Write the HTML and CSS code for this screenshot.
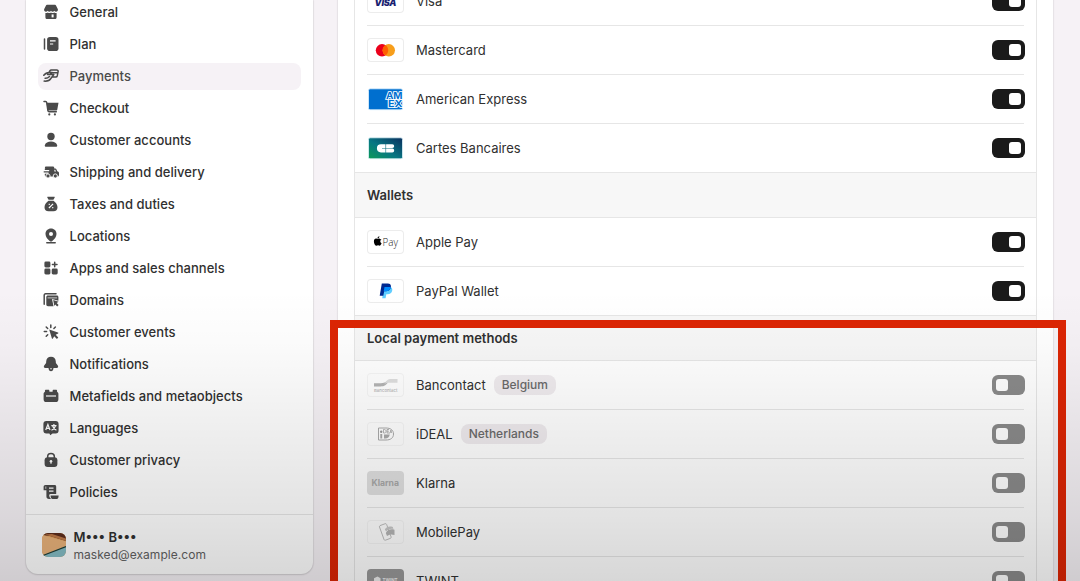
FILE: index.html
```html
<!DOCTYPE html>
<html lang="en">
<head>
    <meta charset="UTF-8" />
    <title>Settings - Payments</title>
    <link rel="stylesheet" href="styles.css">
</head>
<body>

<div class="page">
  <aside class="sidebar">
    <nav class="menu">
      <a class="item"><svg viewBox="0 0 16 16"><path d="M4 .8h8c.5 0 .8.200 1 .6l1.900 3.900c.2 1.500-.6 2.400-1.800 2.400-.9 0-1.500-.4-1.800-1-.4.600-1 1-1.700 1S8.300 7.300 8 6.700c-.4.600-.9 1-1.600 1s-1.300-.4-1.700-1c-.4.600-1 1-1.800 1C1.700 7.700.9 6.800 1.100 5.300L3 1.400c.2-.4.500-.6 1-.6z"/><path d="M2.400 9c1 .1 1.800-.1 2.400-.6 1 .8 2.200.8 3.200 0 1 .8 2.200.8 3.200 0 .6.500 1.400.7 2.400.6v4.200c0 1.200-.7 1.900-1.900 1.900H4.300c-1.200 0-1.900-.7-1.900-1.900z"/><path class="cut" d="M8.600 10.400h2v3h-2z"/></svg>General</a>
      <a class="item"><svg viewBox="0 0 16 16"><rect x="4.100" y=".9" width="11.400" height="14.200" rx="2.800"/><path class="line" d="M1.500 3v10"/><path class="cutline" d="M7 4.900h5.600M7 8h3.200"/></svg>Plan</a>
      <a class="item active"><svg viewBox="0 0 16 16"><path class="line" d="M6 4.300 6.800 3c.4-.6.900-.9 1.500-.9h5.500c.9 0 1.500.7 1.300 1.600l-.8 4c-.2.800-.8 1.300-1.600 1.300H9.700M8.800 4.700h6M.8 7.300C2.500 5 4.400 4.400 6.600 4.500h2.600L6.700 6.600H4.500M6.700 6.600h4.100L8 10.300C6.500 12.800 4.400 13.300 1.200 13.100M2.100 10.300c1.900.3 3-.4 4.400-1.800"/></svg>Payments</a>
      <a class="item"><svg viewBox="0 0 16 16"><path class="line" d="M1 1.500h1.600c.6 0 1 .4 1.100 1l1.200 8c.1.900.6 1.200 1.400 1.200h7"/><path d="M3.500 2.800h12l-1.200 6.700c-.1.700-.6 1.100-1.300 1.100H4.700z"/><circle cx="6.300" cy="14.400" r="1.100"/><circle cx="11.900" cy="14.400" r="1.100"/></svg>Checkout</a>
      <a class="item"><svg viewBox="0 0 16 16"><circle cx="8" cy="4.500" r="3.700"/><path d="M1.800 13.200C2.500 10.700 5 9.500 8 9.500s5.500 1.200 6.200 3.700c.2.900-.5 1.600-1.400 1.600H3.200c-.9 0-1.600-.7-1.400-1.600z"/></svg>Customer accounts</a>
      <a class="item"><svg viewBox="0 0 16 16"><path d="M4.500 2.500h5.300c.9 0 1.500.7 1.500 1.500v.5h.9c.7 0 1.100.3 1.300.9l.8 1.900 1 .5c.5.3.7.7.7 1.300v1.900c0 .9-.6 1.500-1.400 1.500H3.300c-.9 0-1.500-.6-1.500-1.500V9.700h3.700V8.500H.7V7.200h5.500V5.900H1.800V4.600H4l-1-.1c-.8-.1-1.100-.5-1.100-1.100 0-.6.400-.9 1-.9z"/><path class="cut" d="M11.400 5.700h.8l.8 1.800h-1.600z"/><circle class="ring" cx="5" cy="12" r="2.100"/><circle class="ring" cx="12.300" cy="12" r="2.100"/></svg>Shipping and delivery</a>
      <a class="item"><svg viewBox="0 0 16 16"><path d="M4.900.8h6.200c.6 0 .8.500.5 1L10.400 3.800H5.600L4.400 1.800C4.100 1.300 4.300.8 4.900.8zM5.500 4.700h5c2.500 1.700 4 4.200 4 6.600 0 2.500-1.500 3.900-4 3.900h-5c-2.500 0-4-1.400-4-3.900 0-2.400 1.500-4.900 4-6.600z"/><path class="cutline" d="m5.900 12 4.200-4.200M5.700 8.300h1.100M9.200 11.600h1.100"/></svg>Taxes and duties</a>
      <a class="item"><svg viewBox="0 0 16 16"><path d="M8 .6c3.200 0 5.500 2.300 5.500 5.300 0 2.800-2.100 5.200-4.200 7-.8.700-1.800.7-2.600 0-2.100-1.800-4.200-4.200-4.200-7C2.500 2.900 4.800.6 8 .6z"/><circle class="cut" cx="8" cy="6" r="2"/><path class="line" d="M3.800 14.700h8.400"/></svg>Locations</a>
      <a class="item"><svg viewBox="0 0 16 16"><rect x="1.400" y="1.600" width="6" height="5.800" rx="1.400"/><rect x="1.400" y="8.600" width="6" height="5.800" rx="1.400"/><rect x="8.700" y="8.600" width="6" height="5.800" rx="1.400"/><path class="line" d="M11.700 2.200v4.600M9.400 4.500h4.600"/></svg>Apps and sales channels</a>
      <a class="item"><svg viewBox="0 0 16 16"><path class="line" d="M1.200 12.300V3.200c0-.9.500-1.400 1.400-1.400h10.400"/><path d="M5 3.500h8.800c1 0 1.600.6 1.600 1.600v3.700L9 7.100l1.500 7.200H5c-1 0-1.700-.6-1.700-1.700V5.100c0-1 .7-1.600 1.700-1.600z"/><path class="cutline thin" d="M4.600 5.900h9.500"/><path d="m10.200 8.100 5.400 1.700-1.900 1.100 1.900 2.100-1.400 1.400-2-2-.9 1.500z"/></svg>Domains</a>
      <a class="item"><svg viewBox="0 0 16 16"><path d="m6.200 5.600 8.800 2.800c.5.200.5.800.1 1l-2.400 1.400 2.600 2.600-1.400 1.500-2.700-2.700-1.300 2.300c-.2.500-.9.400-1-.1z"/><path class="line" d="M7.800 1.100v2.300M3.200 3l1.500 1.500M12.400 3l-1.500 1.500M1.300 7.600h2.300M3.200 12.200l1.500-1.500"/></svg>Customer events</a>
      <a class="item"><svg viewBox="0 0 16 16"><path d="M8 .8c2.900 0 4.700 1.900 4.800 4.600l.1 1.600 1.900 2.600c.9 1.200.2 2.500-1.200 2.500H2.400C1 12.100.3 10.800 1.200 9.600L3.100 7l.1-1.600C3.300 2.700 5.100.8 8 .8zM5.500 12h5c-.2 2.100-1.100 3.200-2.500 3.200S5.700 14.100 5.500 12z"/><path class="cut" d="M7.200 12.200h1.600v1.100H7.200z"/></svg>Notifications</a>
      <a class="item"><svg viewBox="0 0 16 16"><path d="M3 1.800h2.300c.7 0 1.100.4 1.100 1.100v.8h3.200v-.8c0-.7.400-1.100 1.100-1.100H13c.7 0 1.100.4 1.100 1.100v1.200c.9.400 1.300 1 1.300 1.900v5.200c0 1.900-1 2.900-2.900 2.900h-9c-1.900 0-2.900-1-2.900-2.900V6c0-.9.400-1.500 1.300-1.900V2.900c0-.7.400-1.100 1.100-1.100z"/><path class="cutline" d="M3 8h10"/></svg>Metafields and metaobjects</a>
      <a class="item"><svg viewBox="0 0 16 16"><path d="M3.300 1h9.400c1.900 0 2.900 1 2.900 2.900v6.600c0 1.900-1 2.900-2.900 2.900H9.500l-2.200 1.800-.9-1.800H3.300c-1.900 0-2.900-1-2.900-2.900V3.900C.4 2 1.400 1 3.300 1z"/><path class="cutline" d="M2.700 10 4.900 4.500 7 10M3.500 8.400h2.800M8.300 5.600h5.200M10.900 4v1.600M9.500 5.800c.7 2 1.900 3.600 3.900 4.500M12.500 5.800c-.6 2.100-1.800 3.600-4 4.500"/></svg>Languages</a>
      <a class="item"><svg viewBox="0 0 16 16"><path class="line" d="M4.700 6.500V4.300C4.700 2.500 6 1.400 8 1.400s3.300 1.100 3.300 2.900v2.200"/><rect x="1.600" y="5.300" width="12.800" height="9.700" rx="3"/><circle class="cut" cx="8" cy="9.300" r="1.300"/><path class="cutline" d="M8 9.800v2"/></svg>Customer privacy</a>
      <a class="item"><svg viewBox="0 0 16 16"><path d="M2.500 1h9c1.100 0 1.700.7 1.700 1.700v7.400H7.600c-1.200 0-1.500.9-1.300 2 .2 1.500 1 2.300 2 3H6.100c-1.900 0-2.700-1.100-2.700-2.800V6.200H.6V2.900C.6 1.700 1.300 1 2.500 1z"/><path d="M7.600 11.400h8c0 2.500-.8 3.700-2.500 3.700H9.500c-1.200-.5-1.900-1.600-1.900-3.700z"/><path class="cutline" d="M6 4.200h4.500M6 7.200h4.500"/><path class="cutline thin" d="M2.800 2.500v2.300"/></svg>Policies</a>
    </nav>
    <div class="user">
      <svg class="avatar" viewBox="0 0 24 24">
        <rect width="24" height="24" fill="#e0a35f"/>
        <path d="M0 0h24v8L8 3 0 2z" fill="#5c2c1c"/>
        <path d="M3 1.500 24 8V5.500L10 1z" fill="#c07a48"/>
        <path d="M0 2 24 8.500V14L0 22.500z" fill="#e9b27a"/>
        <path d="M0 23 24 13.500V24H0z" fill="#84bcc4"/>
        <path d="M1 22.500 24 13.600" stroke="#1c3d38" stroke-width="1.200"/>
      </svg>
      <div>
        <div class="user-name">M••• B•••</div>
        <div class="user-mail">masked@example.com</div>
      </div>
    </div>
  </aside>

  <main class="card">
    <div class="methods">
      <section class="group">
        <div class="row">
          <svg class="logo" viewBox="0 0 36 24"><text class="visa" x="18" y="16.500" text-anchor="middle" textLength="22">VISA</text></svg>
          <span class="name">Visa</span><span class="toggle on"></span>
        </div>
        <div class="row">
          <svg class="logo" viewBox="0 0 36 24"><circle cx="14.500" cy="12.300" r="6.200" fill="#eb001b"/><circle cx="21.300" cy="12.300" r="6.200" fill="#f79e1b"/><path d="M17.900 7.100a6.200 6.200 0 0 1 0 10.400 6.200 6.200 0 0 1 0-10.400z" fill="#ff5f00"/></svg>
          <span class="name">Mastercard</span><span class="toggle on"></span>
        </div>
        <div class="row">
          <svg class="logo bare" viewBox="0 0 36 24"><rect x="1" y="1.800" width="34" height="21" rx="1.500" fill="#006fcf" stroke="#dff3ff" stroke-width=".8"/><text class="amex" x="18.500" y="12" textLength="16.500" lengthAdjust="spacingAndGlyphs">AM</text><text class="amex" x="20.500" y="20" textLength="14.500" lengthAdjust="spacingAndGlyphs">EX</text></svg>
          <span class="name">American Express</span><span class="toggle on"></span>
        </div>
        <div class="row">
          <svg class="logo bare" viewBox="0 0 36 24">
            <defs><linearGradient id="cb" x1="0" y1="1" x2="1" y2="0"><stop offset="0" stop-color="#0b9a57"/><stop offset=".45" stop-color="#087783"/><stop offset="1" stop-color="#0a2f5e"/></linearGradient></defs>
            <rect x="1" y="1.800" width="34" height="21" rx="1.500" fill="url(#cb)" stroke="#dff5fa" stroke-width=".8"/>
            <path d="M13.500 8.200H18v3.700h-3.500v.7H18v3.800h-4.500a4.100 4.100 0 0 1 0-8.200zM18.600 8.200h6.200a1.900 1.900 0 0 1 0 3.800h-6.200zM18.600 12.600h6.200a1.900 1.900 0 0 1 0 3.800h-6.200z" fill="#fff"/>
          </svg>
          <span class="name">Cartes Bancaires</span><span class="toggle on"></span>
        </div>
      </section>

      <h3>Wallets</h3>
      <section class="group">
        <div class="row">
          <svg class="logo" viewBox="0 0 36 24"><path d="M13 9.200c-.7-.9-1.700-.9-2.500-.5-.4.200-.7.200-1.100 0-1.600-.7-3 .5-3 2.700 0 2 1.300 4.300 2.600 4.300.6 0 .8-.4 1.500-.4s.9.400 1.500.4c1 0 1.800-1.400 2.100-2.400-1.700-.8-1.800-3.100-.1-4.100zM10 8.200c0-1.100.8-1.800 1.900-2 .1 1.100-.8 2-1.900 2z"/><text class="apple" x="15" y="15.600" textLength="15.500" lengthAdjust="spacingAndGlyphs">Pay</text></svg>
          <span class="name">Apple Pay</span><span class="toggle on"></span>
        </div>
        <div class="row">
          <svg class="logo" viewBox="0 0 36 24"><path d="M16.500 8h5.600c2.100 0 3.100 1.500 2.600 3.600-.5 2.500-2.200 3.700-4.500 3.700h-1.400l-.7 3.900h-3.400z" fill="#60cdff"/><path d="M14.300 4.500h5.900c2.500 0 3.700 1.400 3.200 3.700-.5 2.600-2.400 4-5 4h-1.700l-.9 4.500h-3.600z" fill="#002991"/><path d="M17 8h6.400c-.5 2.700-2.400 4.200-5 4.200h-2.200z" fill="#008cff"/></svg>
          <span class="name">PayPal Wallet</span><span class="toggle on"></span>
        </div>
      </section>

      <h3>Local payment methods</h3>
      <section class="group local">
        <div class="row">
          <svg class="logo" viewBox="0 0 36 24"><path d="M6.500 10.200h6.500c3.500 0 5-1 8-3v1.300c-2 3.500-4 4.900-8 4.900H6.500z" fill="#b4b4b4"/><path d="M30 6v3.800h-7c-3 0-4 .2-6 1.200 1.500-3 3-5 7-5z" fill="#dedede"/><text class="banc" x="6.500" y="18.800" textLength="23.500" lengthAdjust="spacingAndGlyphs">Bancontact</text></svg>
          <span class="name">Bancontact</span><span class="badge">Belgium</span><span class="toggle"></span>
        </div>
        <div class="row">
          <svg class="logo" viewBox="0 0 36 24"><path d="M11 6h7.500c4.500 0 7.500 2 7.500 6s-3 6-7.500 6H11z" fill="none" stroke="#aaa"/><circle cx="13.700" cy="9.800" r="1.200" fill="#999"/><path d="M12.800 12h1.900v4.500h-1.900zM16.500 12.500h5.800c-.6 2.700-2 4-4.500 4h-1.300z" fill="#aaa"/><path d="M16 7.500v3.500h1c2 0 2-3.500 0-3.500zM19.500 7.500h2M19.500 9.200h2M19.500 11h3M19.500 7.500V11M22.700 11l.7-3 .8 3" fill="none" stroke="#999" stroke-width=".7"/></svg>
          <span class="name">iDEAL</span><span class="badge">Netherlands</span><span class="toggle"></span>
        </div>
        <div class="row">
          <svg class="logo klarna" viewBox="0 0 36 24"><text x="4" y="15.200" textLength="27.500" lengthAdjust="spacingAndGlyphs">Klarna</text></svg>
          <span class="name">Klarna</span><span class="toggle"></span>
        </div>
        <div class="row">
          <svg class="logo" viewBox="0 0 36 24"><path d="m12.500 5.600 5.200-1.900c.6-.2 1.200.1 1.400.7l4.500 12.500c.2.600 0 1.200-.6 1.400l-5.100 1.900c-.7.200-1.200-.1-1.400-.7L12 7c-.2-.6 0-1.200.5-1.400z" fill="none" stroke="#b4b4b4" stroke-width=".9"/><path d="M17.300 9.500c2-3 4.700-3.500 8-2.500l.6 2c-3-.5-5.500.2-7.300 2.500z" fill="#c8c8c8"/><path d="M18.300 13c2-3.600 5-4.300 8.700-3.200v5.200c-3.300-1-5.500-.5-7.500 1z" fill="#b4b4b4"/></svg>
          <span class="name">MobilePay</span><span class="toggle"></span>
        </div>
        <div class="row">
          <svg class="logo twint" viewBox="0 0 36 24"><path d="M10 7.500 13 9.200v3.600L10 15l-3.500-2.200V9.200z" fill="#eee"/><text x="15" y="12.900" textLength="15" lengthAdjust="spacingAndGlyphs">TWINT</text></svg>
          <span class="name">TWINT</span><span class="toggle"></span>
        </div>
      </section>
    </div>
  </main>

  <div class="highlight"></div>
  <div class="fade"></div>
</div>

</body>
</html>
```
FILE: styles.css
```css
* {
  box-sizing: border-box;
}
body {
  margin: 0;
  background: #f6f2f6;
  font-family: Inter, sans-serif;
  font-size: 13px;
  color: #303030;
}
.page {
  position: relative;
  display: flex;
  align-items: flex-start;
  gap: 25px;
  height: 581px;
  padding-left: 26px;
  overflow: hidden;
}

/* sidebar */
.sidebar {
  width: 287px;
  height: 574px;
  background: #fff;
  border-radius: 0 0 12px 12px;
  box-shadow: 0 0 1px 1px rgba(0,0,0,0.06), 0 1px 2px rgba(0,0,0,0.1);
  display: flex;
  flex-direction: column;
}
.menu {
  display: flex;
  flex-direction: column;
  gap: 4.97px;
  margin-top: -1.4px;
  padding: 0 12px;
  height: 515.4px;
}
.item {
  display: flex;
  align-items: center;
  gap: 10.5px;
  height: 27px;
  flex: none;
  padding-left: 5px;
  border-radius: 8px;
  font-weight: 500;
  letter-spacing: 0.03px;
}
.item.active {
  background: #f6f2f6;
  color: #4a4a4a;
}
.item svg {
  width: 16px;
  height: 16px;
  fill: #4a4a4a;
}
.item .line {
  fill: none;
  stroke: #4a4a4a;
  stroke-width: 1.5;
  stroke-linecap: round;
  stroke-linejoin: round;
}
.item .cut {
  fill: #fff;
}
.item .cutline {
  fill: none;
  stroke: #fff;
  stroke-width: 1.2;
}
.item .thin {
  stroke-width: 0.7;
}
.item .ring {
  stroke: #fff;
  stroke-width: 0.9;
}
.user {
  display: flex;
  align-items: center;
  gap: 8px;
  flex: 1;
  padding: 1px 15.5px 0;
  border-top: 1px solid #e6e6e6;
}
.avatar {
  width: 24px;
  height: 24px;
  border-radius: 6px;
}
.user-name {
  font-weight: 600;
  line-height: 18px;
}
.user-mail {
  font-size: 12px;
  line-height: 17px;
  letter-spacing: 0.05px;
  color: #616161;
}

/* payment methods */
.card {
  width: 715px;
  height: 640px;
  padding: 0 16px;
  background: #fff;
  box-shadow: 0 0 1px 1px rgba(0,0,0,0.06);
}
.methods {
  margin-top: -23px;
  border: 1px solid #e6e6e6;
  border-top: none;
}
.group {
  padding: 0 12px;
  border-bottom: 1px solid #e6e6e6;
}
.row {
  display: flex;
  align-items: center;
  height: 49px;
  border-bottom: 1px solid #e6e6e6;
}
.row:last-child {
  height: 48px;
  border-bottom: none;
}
h3 {
  margin: 0;
  height: 45px;
  padding: 0 12px;
  line-height: 44px;
  font-size: 13px;
  font-weight: 600;
  background: #f7f7f7;
  border-bottom: 1px solid #e6e6e6;
}
.logo {
  width: 37px;
  height: 24px;
  flex: none;
  margin-right: 12px;
  border-radius: 4px;
  box-shadow: inset 0 0 0 1px #ececec;
}
.logo.bare {
  box-shadow: none;
}
.logo text {
  font-family: Inter, sans-serif;
  font-weight: 700;
}
.logo .visa {
  font-size: 9px;
  font-weight: 900;
  font-style: italic;
  fill: #1a1f71;
}
.logo .amex {
  font-size: 8.5px;
  line-height: 1;
  fill: #006fcf;
  stroke: #fff;
  stroke-width: 1.6;
  paint-order: stroke;
}
.logo .apple {
  font-family: "Open Sans", sans-serif;
  font-size: 10.5px;
  font-weight: 300;
  fill: #222;
}
.logo .banc {
  font-size: 4px;
  font-weight: 500;
  fill: #b4b4b4;
}
.local .logo {
  box-shadow: inset 0 0 0 1px #f5f5f5;
}
.local .klarna {
  background: #e0e0e0;
  box-shadow: none;
}
.klarna text {
  font-size: 9px;
  fill: #a8a8a8;
}
.local .twint {
  background: #989898;
  box-shadow: none;
}
.twint text {
  font-size: 5px;
  fill: #eee;
}
.badge {
  height: 20px;
  margin-left: 8px;
  padding: 0 8px;
  line-height: 20px;
  border-radius: 8px;
  font-size: 12px;
  font-weight: 500;
  color: #6a6a6a;
  background: #efebee;
}
.toggle {
  width: 33px;
  height: 20px;
  margin-left: auto;
  margin-right: -0.5px;
  padding: 4px;
  border-radius: 6px;
  background: #8a8a8a;
}
.toggle::before {
  content: "";
  display: block;
  width: 12px;
  height: 12px;
  border-radius: 3px;
  background: #fff;
}
.toggle.on {
  background: #1a1a1a;
}
.toggle.on::before {
  margin-left: auto;
}

/* overlays */
.highlight {
  position: absolute;
  left: 330px;
  top: 320px;
  width: 736px;
  height: 300px;
  border: 8px solid #dc2504;
}
.fade {
  position: absolute;
  inset: 0;
  background: linear-gradient(to bottom, rgba(0,0,0,0) 290px, rgba(0,0,0,0.02) 350px, rgba(0,0,0,0.07) 440px, rgba(0,0,0,0.11) 514px, rgba(0,0,0,0.155) 581px);
  pointer-events: none;
}
```
